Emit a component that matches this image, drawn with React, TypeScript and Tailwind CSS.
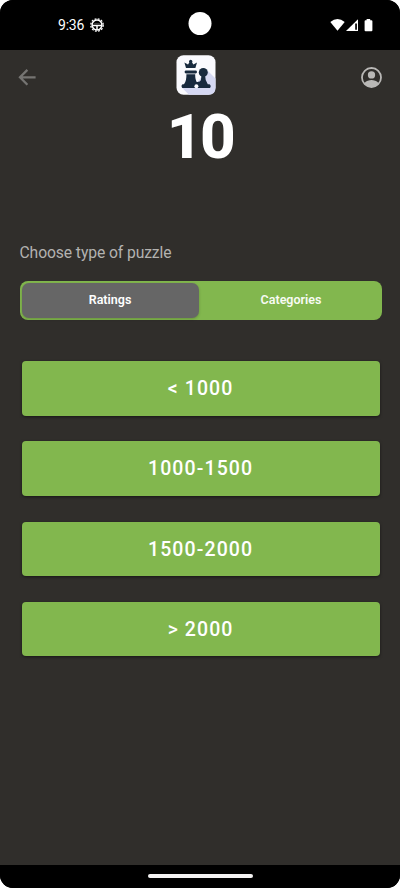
/**
 * Puzzle selection screen
 * Lets the player pick a rating range or a category of puzzles
 */

import React, { useState } from 'react'

type PuzzleTab = 'Ratings' | 'Categories'

const TABS: PuzzleTab[] = ['Ratings', 'Categories']
const RATING_RANGES = ['< 1000', '1000-1500', '1500-2000', '> 2000']

/**
 * Android status bar with the camera cutout
 */
const StatusBar: React.FC = () => (
  <div className="relative flex h-[50px] shrink-0 items-center justify-between bg-black pr-[26px] pl-[58px] text-white">
    <div className="flex items-center gap-[6px]">
      <span className="text-[14px] leading-[20px] tracking-[-0.2px]">9:36</span>
      <svg className="h-[14px] w-[14px]" viewBox="0 0 14 14" fill="none" stroke="currentColor">
        <circle cx="7" cy="7" r="6.2" strokeWidth="1.3" strokeDasharray="1.9 1.346" />
        <circle cx="7" cy="7" r="4.9" strokeWidth="1.5" />
        <path d="M2.2 7.4h9.6M7 7.4V12" strokeWidth="1.5" />
        <path d="M4.2 5.6h5.6" strokeWidth="0.8" opacity="0.3" />
      </svg>
    </div>

    {/* Camera cutout */}
    <div className="absolute top-[12px] left-1/2 h-[23px] w-[23px] -translate-x-1/2 rounded-full bg-white" />

    <svg className="h-[14px] w-[44px]" viewBox="0 0 44 14" fill="currentColor">
      <path d="M0.3 4Q7.5 -1.8 14.7 4L7.5 12.8Z" />
      <path d="M28 1.2V13H16Z" />
      <path d="M25.2 5.4h1.7v6.4h-1.7z" fill="#000" />
      <path d="M36.6 1.1h3.6v1.1h1.2q1 0 1 1v9.1q0 1-1 1h-5.8q-1 0-1-1V3.2q0-1 1-1h1z" />
    </svg>
  </div>
)

/**
 * App logo: a chess queen next to a pawn
 */
const Logo: React.FC = () => (
  <svg className="h-[40px] w-[40px]" viewBox="0 0 40 40">
    <rect x="0.5" y="0.3" width="39" height="39.4" rx="7" fill="#fafafe" />
    <path d="M30.5 14.5L39.5 23.5V32.7Q39.5 39.7 32.5 39.7H13L6 32.7L21 28Z" fill="#d5d8f2" />
    <g fill="#182a3e">
      <path d="M8.4 7.6L12 9.4L13.3 7.5A1.7 1.7 0 1 1 16.1 7.5L17.4 9.4L21 7.6L19.4 12.9H10Z" />
      <rect x="8.6" y="15.5" width="12.4" height="2.9" rx="1.4" />
      <path d="M10.4 19.2H19.2Q19 25 21.5 28.5L22 33H6.3Q4.6 30.6 6.6 29.2H8Q10.6 26 10.4 19.2Z" />
      <circle cx="27.3" cy="17.4" r="4.5" />
      <path d="M25.6 20H29Q29 25 31.8 29.2H33.5Q35.6 30.6 34 33H19V29.2H22.8Q25.6 25 25.6 20Z" />
      <path d="M18 26Q22 28.5 26 25V31H18Z" />
    </g>
    <circle cx="20.4" cy="31.3" r="2" fill="#fafafe" />
  </svg>
)

/**
 * Top bar with back button, logo and profile button
 */
const Header: React.FC = () => (
  <header className="grid h-[54px] shrink-0 grid-cols-[1fr_40px_1fr] items-center px-[16px]">
    <button type="button" aria-label="Back" className="flex w-fit text-[#757472]">
      <svg className="h-[22px] w-[22px]" viewBox="0 0 22 22" fill="none" stroke="currentColor" strokeWidth="2.3">
        <path d="M19.6 11.3H4.2M11.4 3.9L4 11.3L11.4 18.7" />
      </svg>
    </button>
    <div className="-mt-[5px] -ml-[4px]">
      <Logo />
    </div>
    <button type="button" aria-label="Profile" className="flex justify-self-end text-[#b9b8b6]">
      <svg className="h-[25px] w-[25px]" viewBox="0 0 24 24" fill="currentColor">
        <path d="M12 2a10 10 0 1 0 0 20a10 10 0 0 0 0-20zm0 1.8a8.2 8.2 0 0 1 6.5 13.2C17.1 15.2 14.2 14.4 12 14.4S6.9 15.2 5.5 17A8.2 8.2 0 0 1 12 3.8z" />
        <circle cx="12" cy="9.5" r="3.5" />
      </svg>
    </button>
  </header>
)

const App: React.FC = () => {
  const [activeTab, setActiveTab] = useState<PuzzleTab>('Ratings')

  return (
    <div className="h-[888px] w-[400px] bg-white font-[Roboto,sans-serif]">
      <div className="flex h-full flex-col overflow-hidden rounded-[13px] bg-black">
        <StatusBar />

        <main className="flex flex-1 flex-col bg-[#302e2b]">
          <Header />

          <h1 className="mt-[1px] text-center text-[62px] leading-[64px] font-extrabold tracking-[-2.5px] text-white">
            10
          </h1>

          <p className="mt-[74px] pl-[19.5px] text-[15.7px] leading-[20px] tracking-[-0.1px] text-[#b3b2b0]">
            Choose type of puzzle
          </p>

          {/* Puzzle type switch */}
          <div className="mt-[18px] mr-[18.5px] ml-[19.5px] flex h-[39px] rounded-[8px] bg-[#82b74e] p-[2px]">
            {TABS.map((tab) => (
              <button
                key={tab}
                type="button"
                onClick={() => setActiveTab(tab)}
                className={
                  tab === activeTab
                    ? 'w-[177px] rounded-[7px] bg-[#666666] text-[12.5px] font-semibold text-white shadow-[0_1px_3px_rgba(0,0,0,0.2)]'
                    : 'flex-1 rounded-[7px] pl-[4px] text-[12.5px] font-semibold text-[#f8fbf4]'
                }
              >
                {tab}
              </button>
            ))}
          </div>

          {/* Rating ranges */}
          <div className="mt-[41px] flex flex-col gap-[25.8px] pr-[20.4px] pl-[21.6px]">
            {RATING_RANGES.map((range) => (
              <button
                key={range}
                type="button"
                className="h-[54.5px] rounded-[4px] bg-[#82b74e] pt-[1px] text-[19.5px] font-medium tracking-[1.1px] text-white shadow-[0_1px_3px_rgba(0,0,0,0.5)]"
              >
                {range}
              </button>
            ))}
          </div>
        </main>

        {/* Gesture bar */}
        <div className="flex h-[23px] shrink-0 justify-center bg-black pt-[9px]">
          <div className="h-[4px] w-[105px] rounded-full bg-[#f4f2f2]" />
        </div>
      </div>
    </div>
  )
}

export default App
